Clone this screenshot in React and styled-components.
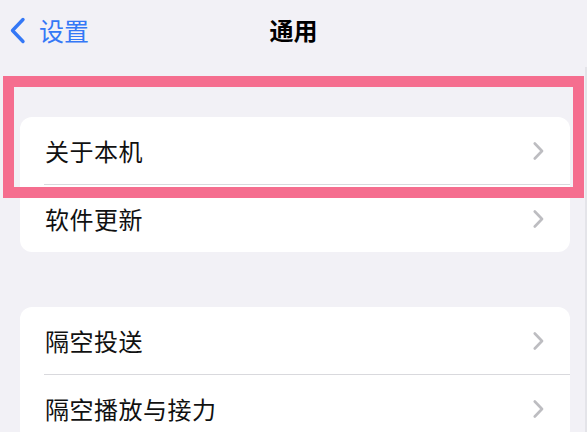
import React from 'react';
import styled, { createGlobalStyle } from 'styled-components';

const GlobalStyle = createGlobalStyle`
  html, body {
    margin: 0;
    padding: 0;
    background: #f2f1f6;
  }
  body {
    font-family: "Noto Sans CJK SC", "Noto Sans", sans-serif;
    color: #111;
  }
`;

const Screen = styled.div`
  position: relative;
  width: 587px;
  height: 432px;
  overflow: hidden;
  background: #f2f1f6;
`;

const NavBar = styled.header`
  height: 67px;
  box-sizing: border-box;
  padding-bottom: 7px;
  display: grid;
  grid-template-columns: 1fr auto 1fr;
  align-items: center;
`;

const BackButton = styled.div`
  display: flex;
  align-items: center;
  gap: 13px;
  padding-left: 9px;
  color: #3478f6;
  font-size: 25px;
  line-height: 1;
`;

const Title = styled.h1`
  margin: 0;
  font-size: 24px;
  font-weight: 700;
  line-height: 1;
  color: #000;
`;

const Content = styled.main`
  height: calc(432px - 67px);
  padding: 50px 15px 0 20px;
  border-right: 2px solid #e4e4e9;
  box-sizing: border-box;
`;

const Group = styled.section`
  background: #fff;
  border-radius: 12px;
  overflow: hidden;
  margin-bottom: ${p => p.$gap || 0}px;
`;

const Row = styled.div`
  height: 67px;
  display: flex;
  align-items: center;
  justify-content: space-between;
  padding: 0 26px 0 25px;
  font-size: 24px;
  line-height: 1;
  letter-spacing: 0.5px;
  color: #111;
`;

const Label = styled.span`
  padding-top: 1px;
`;

const Separator = styled.div`
  height: 1px;
  margin-left: 24px;
  background: #d9d9dd;
`;

const Highlight = styled.div`
  position: absolute;
  left: 3px;
  top: 76px;
  width: 581px;
  height: 122px;
  border: 11px solid #f56e8f;
  box-sizing: border-box;
  pointer-events: none;
`;

const BackChevron = () => (
  <svg width="17" height="27" viewBox="0 0 17 27" fill="none">
    <path d="M14 2.5 L3.5 13.5 L14 24.5" stroke="#3478f6" strokeWidth="3.4" strokeLinecap="round" strokeLinejoin="round" />
  </svg>
);

const Chevron = () => (
  <svg width="11" height="18" viewBox="0 0 11 18" fill="none">
    <path d="M1.8 1.5 L9 9 L1.8 16.5" stroke="#bdbdc1" strokeWidth="2.6" strokeLinecap="round" strokeLinejoin="round" />
  </svg>
);

const groups = [
  ['关于本机', '软件更新'],
  ['隔空投送', '隔空播放与接力'],
];

export default function App() {
  return (
    <Screen>
      <GlobalStyle />
      <NavBar>
        <BackButton>
          <BackChevron />
          <span>设置</span>
        </BackButton>
        <Title>通用</Title>
        <div />
      </NavBar>
      <Content>
        {groups.map((items, gi) => (
          <Group key={gi} $gap={gi === 0 ? 55 : 0}>
            {items.map((item, i) => (
              <React.Fragment key={item}>
                {i > 0 && <Separator />}
                <Row>
                  <Label>{item}</Label>
                  <Chevron />
                </Row>
              </React.Fragment>
            ))}
          </Group>
        ))}
      </Content>
      <Highlight />
    </Screen>
  );
}
